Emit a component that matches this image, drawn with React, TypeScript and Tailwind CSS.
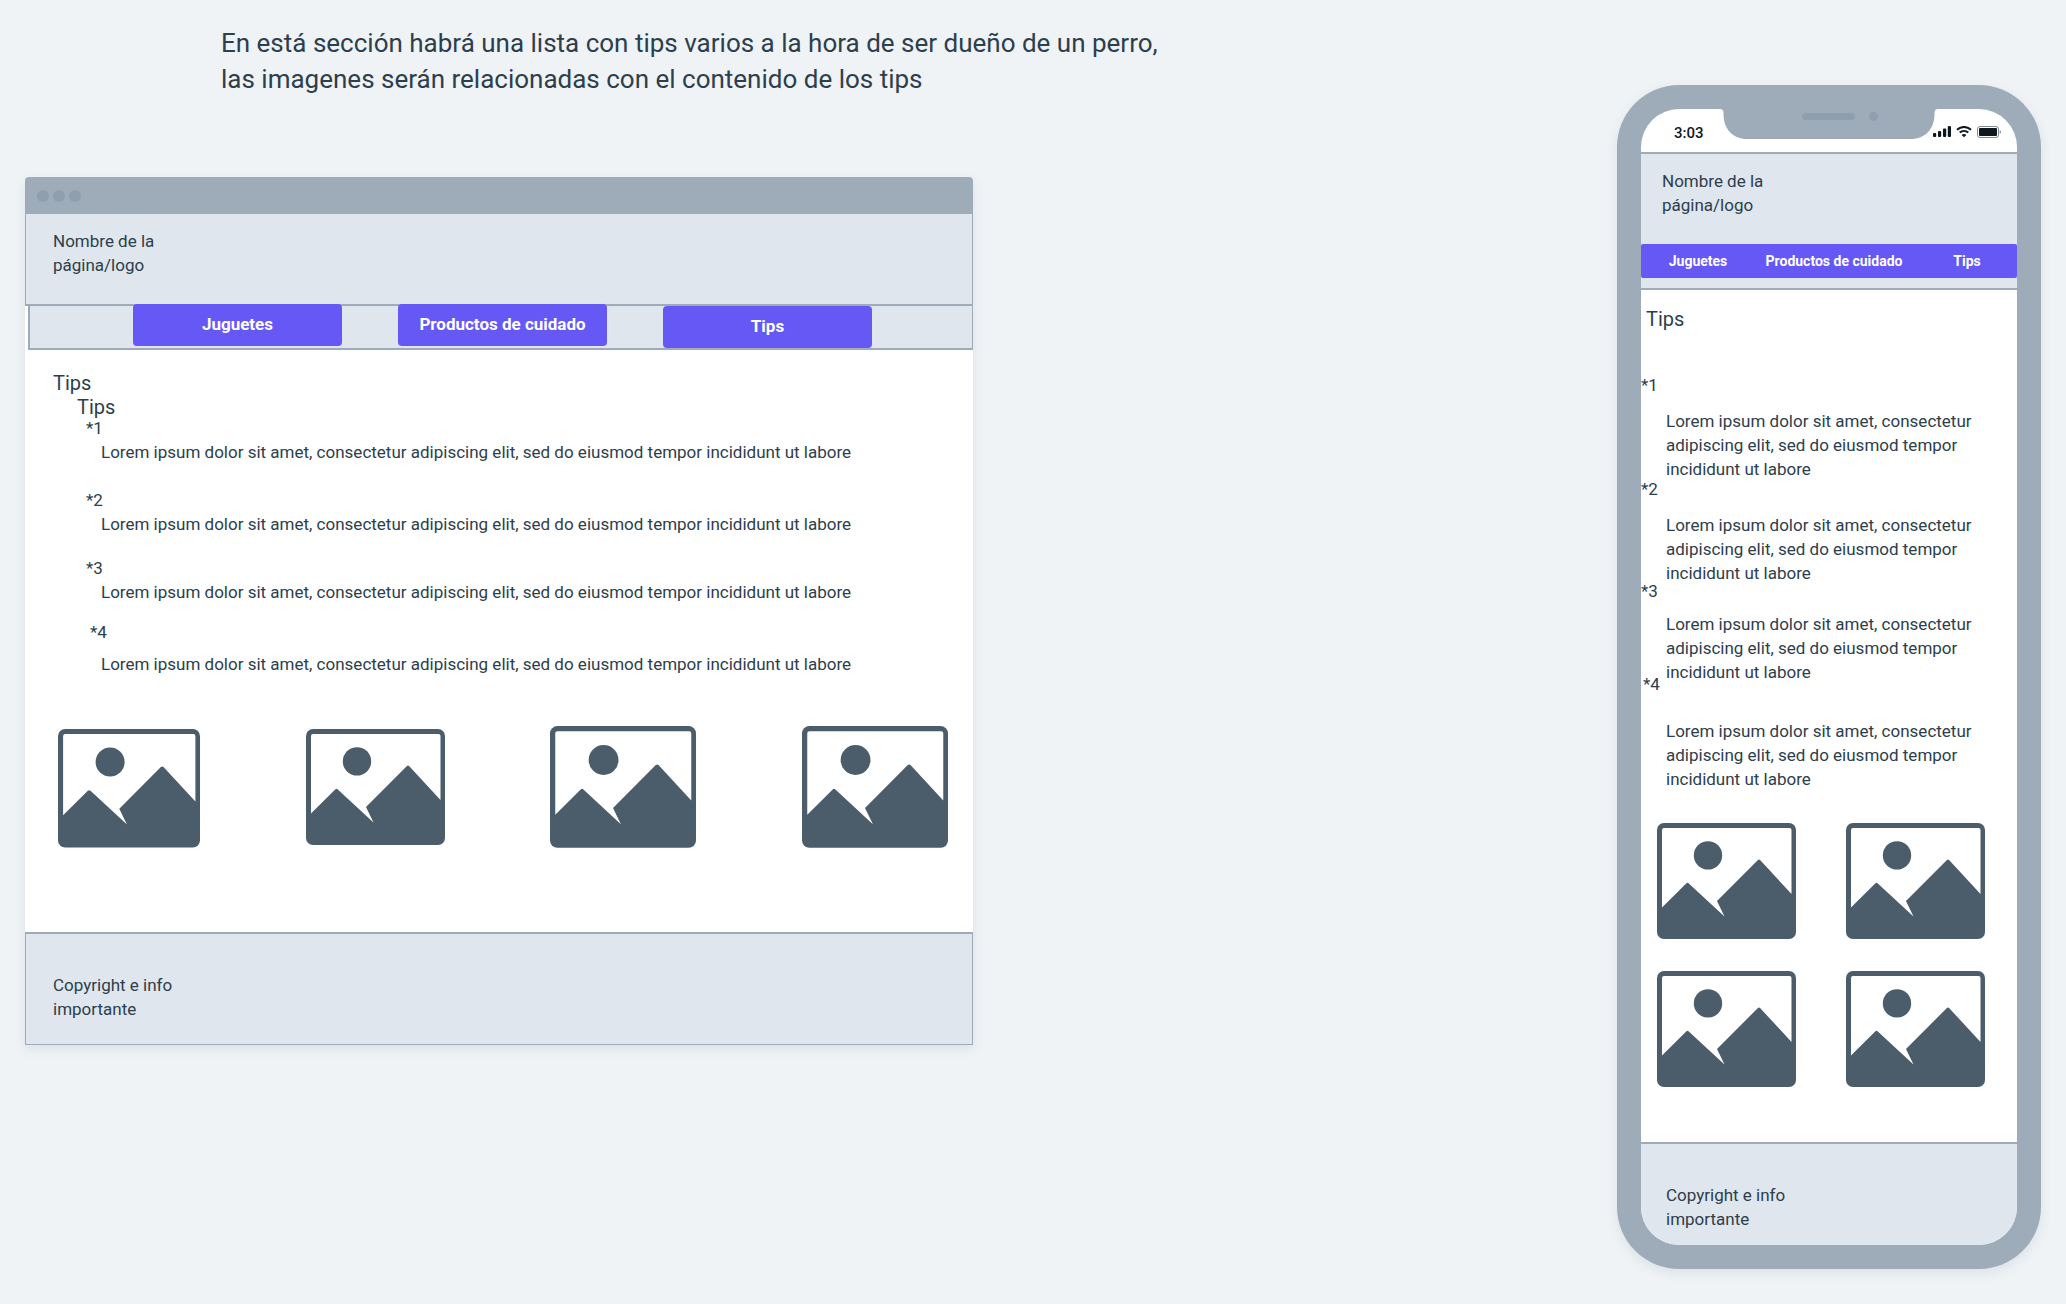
const LOREM =
  'Lorem ipsum dolor sit amet, consectetur adipiscing elit, sed do eiusmod tempor incididunt ut labore';

const FONT = 'font-[Roboto,"Liberation_Sans",sans-serif]';

function PicturePlaceholder({ className }: { className: string }) {
  return (
    <svg viewBox="0 0 139 116" className={className} role="img" aria-label="Imagen">
      <rect x="0" y="0" width="139" height="116" rx="7" fill="#4b5c6a" />
      <path
        d="M7 5H132.5Q134.5 5 134.5 7V71L103.3 37.2Q102 36 100.7 37.2L60 78L67.5 93.5L31.8 60.4Q30.5 59.3 29.2 60.4L5 84.5V7Q5 5 7 5Z"
        fill="#fff"
      />
      <circle cx="51" cy="32.4" r="14.2" fill="#4b5c6a" />
    </svg>
  );
}

function SignalIcon() {
  return (
    <svg viewBox="0 0 18 12" className="h-3 w-[18px]" fill="#0f171f" aria-hidden="true">
      <rect x="0" y="7" width="3.2" height="4" rx="1" />
      <rect x="5" y="5" width="3.2" height="6" rx="1" />
      <rect x="10" y="2.5" width="3.2" height="8.5" rx="1" />
      <rect x="14.8" y="0" width="3.2" height="11" rx="1" />
    </svg>
  );
}

function WifiIcon() {
  return (
    <svg viewBox="0 0 16 12" className="h-3 w-4" fill="none" stroke="#0f171f" aria-hidden="true">
      <path d="M1 3.8C5 0 11 0 15 3.8" strokeWidth="2" />
      <path d="M3.7 6.6C6.2 4.3 9.8 4.3 12.3 6.6" strokeWidth="2" />
      <path d="M8 11.2L5.6 8.9C7 7.7 9 7.7 10.4 8.9Z" fill="#0f171f" stroke="none" />
    </svg>
  );
}

function BatteryIcon() {
  return (
    <svg viewBox="0 0 24 12" className="h-3 w-6" aria-hidden="true">
      <rect x="0.5" y="0.5" width="21" height="11" rx="2.5" fill="none" stroke="#0f171f" strokeOpacity="0.5" />
      <rect x="2" y="2" width="18" height="8" rx="1" fill="#0f171f" />
      <path d="M22.7 4Q24 4.6 24 6T22.7 8Z" fill="#0f171f" fillOpacity="0.5" />
    </svg>
  );
}

function Notch() {
  return (
    <svg viewBox="0 0 220 31" className="absolute -top-px left-1/2 h-[31px] w-[220px] -translate-x-1/2" aria-hidden="true">
      <path
        d="M0 0H220V1H219Q215.500 1 215.500 5V6C215.500 21 206 31 192 31H28C14 31 4.500 21 4.500 6V5Q4.500 1 1 1H0Z"
        fill="#9eacb9"
      />
      <rect x="83" y="5" width="53" height="7" rx="3.500" fill="#8f9fae" />
      <circle cx="154.500" cy="8.500" r="4.500" fill="#8f9fae" />
    </svg>
  );
}

const desktopTips = [
  { label: '*1', labelClass: 'pl-[61px]', textClass: 'pb-6' },
  { label: '*2', labelClass: 'pl-[61px]', textClass: 'pb-5' },
  { label: '*3', labelClass: 'pl-[61px]', textClass: 'pb-4' },
  { label: '*4', labelClass: 'pl-[65px] pb-2', textClass: '' },
];

const phoneTips = [
  { label: '*1', labelClass: 'pb-3', textClass: '-mb-1' },
  { label: '*2', labelClass: 'pb-3', textClass: '-mb-1.5' },
  { label: '*3', labelClass: 'pb-[9px]', textClass: '-mb-3' },
  { label: '*4', labelClass: 'pl-0.5 pb-[23px]', textClass: '' },
];

function BrowserMockup() {
  return (
    <section className="w-full max-w-[948px] rounded-t-[4px] bg-white shadow-[0_4px_12px_rgba(60,80,100,0.1)]">
      <div className="flex h-[37px] items-center gap-1 rounded-t-[4px] bg-[#9eacb9] px-3">
        <span className="size-3 rounded-full bg-[#8f9fae]" />
        <span className="size-3 rounded-full bg-[#8f9fae]" />
        <span className="size-3 rounded-full bg-[#8f9fae]" />
      </div>
      <header className="border-x border-b-2 border-[#9eacb9] bg-[#dfe6ee] px-[27px] pt-[15px] pb-[27px] text-[17px] leading-6">
        Nombre de la
        <br />
        página/logo
      </header>
      <nav className="relative -mt-0.5 ml-[3px] flex h-[46px] gap-14 border-r border-b-2 border-l-2 border-[#9eacb9] pl-[103px]">
        <div className="absolute inset-x-0 top-0.5 bottom-0 bg-[#dfe6ee]" />
        <button className="relative h-[42px] w-[209px] rounded-[4px] bg-[#6558f5] text-[17px] font-bold text-white">Juguetes</button>
        <button className="relative h-[42px] w-[209px] rounded-[4px] bg-[#6558f5] text-[17px] font-bold text-white">Productos de cuidado</button>
        <button className="relative h-[42px] w-[209px] self-end rounded-[4px] bg-[#6558f5] text-[17px] font-bold text-white">Tips</button>
      </nav>
      <main className="pt-[21px]">
        <h2 className="pl-7 text-xl leading-6">Tips</h2>
        <h3 className="-mb-[3px] pl-[52px] text-xl leading-6">Tips</h3>
        <dl className="text-[17px] leading-6">
          {desktopTips.map((tip) => (
            <div key={tip.label}>
              <dt className={tip.labelClass}>{tip.label}</dt>
              <dd className={`pl-[76px] ${tip.textClass}`}>{LOREM}</dd>
            </div>
          ))}
        </dl>
        <div className="flex items-end justify-between pt-[50px] pr-[25px] pb-[84px] pl-[33px]">
          <PicturePlaceholder className="w-[142px]" />
          <PicturePlaceholder className="mb-[3px] w-[139px]" />
          <PicturePlaceholder className="w-[146px]" />
          <PicturePlaceholder className="w-[146px]" />
        </div>
      </main>
      <footer className="border border-t-2 border-[#9eacb9] bg-[#dfe6ee] px-[27px] pt-[39px] pb-[23px] text-[17px] leading-6">
        Copyright e info
        <br />
        importante
      </footer>
    </section>
  );
}

function PhoneMockup() {
  return (
    <section className="w-[424px] shrink-0 rounded-[62px] bg-[#9eacb9] p-6 shadow-[0_4px_12px_rgba(60,80,100,0.1)]">
      <div className="relative overflow-hidden rounded-[38px] bg-white">
        <Notch />
        <div className="flex h-[43px] items-center justify-between pt-[3px] pr-4 pl-[33px]">
          <span className="pt-0.5 text-[15px] font-medium text-[#0f171f]">3:03</span>
          <span className="flex items-center gap-[5px]">
            <SignalIcon />
            <WifiIcon />
            <BatteryIcon />
          </span>
        </div>
        <header className="border-y-2 border-[#9eacb9] bg-[#dfe6ee] pt-[15px] pb-2.5">
          <p className="px-[21px] pb-[27px] text-[17px] leading-6">
            Nombre de la
            <br />
            página/logo
          </p>
          <nav className="flex h-[34px] items-center rounded-[2px] bg-[#6558f5] text-sm font-bold text-white">
            <button className="w-[114px]">Juguetes</button>
            <button className="w-[158px]">Productos de cuidado</button>
            <button className="flex-1 pl-1">Tips</button>
          </nav>
        </header>
        <main>
          <h2 className="pt-[17px] pb-[42px] pl-[5px] text-xl leading-6">Tips</h2>
          <dl className="text-[17px] leading-6">
            {phoneTips.map((tip) => (
              <div key={tip.label}>
                <dt className={tip.labelClass}>{tip.label}</dt>
                <dd className={`pr-6 pl-[25px] ${tip.textClass}`}>{LOREM}</dd>
              </div>
            ))}
          </dl>
          <div className="grid grid-cols-[139px_139px] gap-x-[50px] gap-y-8 pt-8 pb-[55px] pl-4">
            <PicturePlaceholder className="w-full" />
            <PicturePlaceholder className="w-full" />
            <PicturePlaceholder className="w-full" />
            <PicturePlaceholder className="w-full" />
          </div>
        </main>
        <footer className="border-t-2 border-[#9eacb9] bg-[#dfe6ee] px-[25px] pt-[39px] pb-[14px] text-[17px] leading-6">
          Copyright e info
          <br />
          importante
        </footer>
      </div>
    </section>
  );
}

export default function App() {
  return (
    <div className={`flex min-h-screen justify-between bg-[#eff3f6] px-[25px] text-[#2d3e4c] ${FONT}`}>
      <div className="flex-1 pt-[25px]">
        <h1 className="pb-20 pl-[196px] text-[26px] leading-9 whitespace-nowrap">
          En está sección habrá una lista con tips varios a la hora de ser dueño de un perro,
          <br />
          las imagenes serán relacionadas con el contenido de los tips
        </h1>
        <BrowserMockup />
      </div>
      <div className="pt-[85px]">
        <PhoneMockup />
      </div>
    </div>
  );
}
